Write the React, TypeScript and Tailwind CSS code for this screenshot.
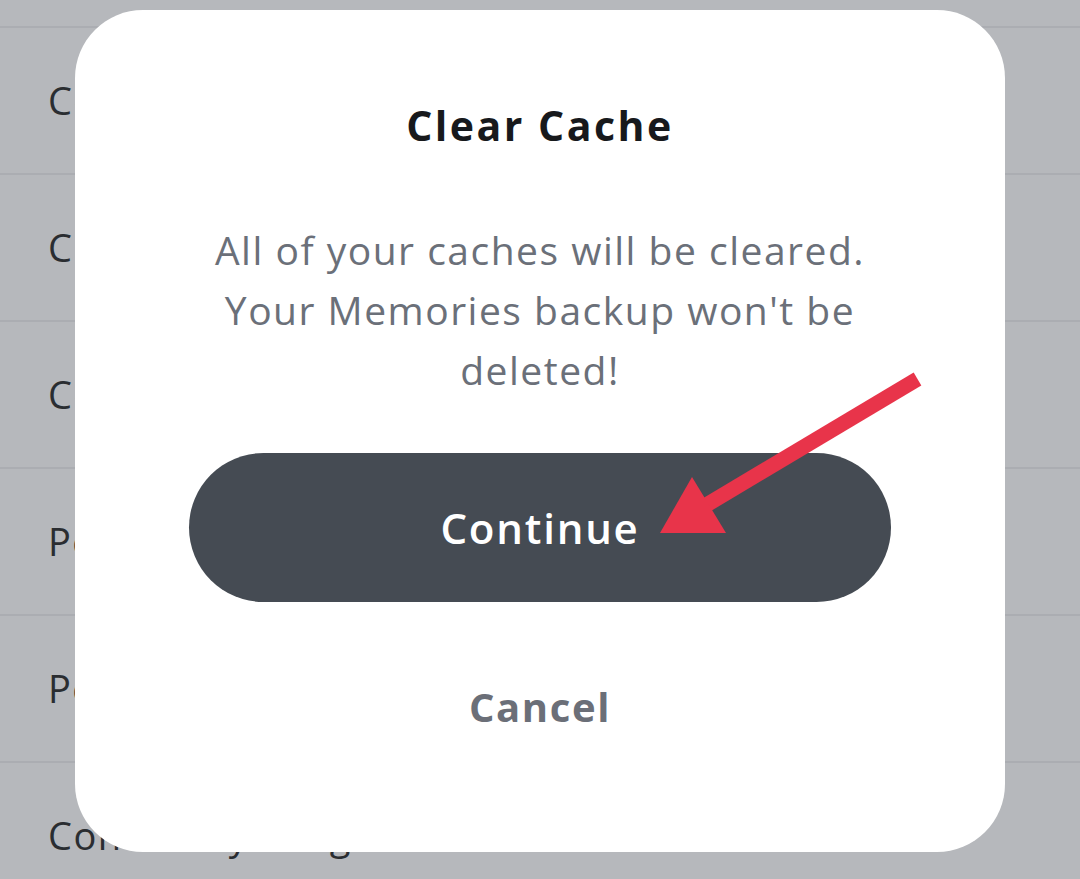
import React from "react";

const rows = [
  "Contact Me",
  "Clear Data",
  "Connected Apps",
  "Permissions",
  "Personalization",
  "Contact Syncing",
];

const ClearCacheModal: React.FC = () => {
  return (
    <div className="absolute left-[75px] top-[10px] w-[930px] h-[842px] bg-white rounded-[68px] flex flex-col items-center">
      <h2 className="mt-[91px] text-[41px] leading-[48px] font-bold tracking-[2.5px] text-[#17191c]">
        Clear Cache
      </h2>
      <p className="mt-[71px] text-center text-[39px] leading-[60px] tracking-[1.5px] text-[#6b7079]">
        All of your caches will be cleared.
        <br />
        Your Memories backup won't be
        <br />
        deleted!
      </p>
      <button className="mt-[53px] w-[702px] h-[149px] rounded-full bg-[#454b53] text-white text-[42px] font-semibold tracking-[1.8px]">
        Continue
      </button>
      <button className="mt-[81px] text-[40px] leading-[48px] font-bold tracking-[1.6px] text-[#6b6f78]">
        Cancel
      </button>
    </div>
  );
};

export default function App() {
  return (
    <div
      className="relative w-[1080px] h-[879px] overflow-hidden bg-[#b6b8bc]"
      style={{ fontFamily: "'Open Sans', 'Noto Sans', sans-serif" }}
    >
      <div className="flex flex-col">
        <div className="h-[26px]" />
        {rows.map((r) => (
          <div
            key={r}
            className="h-[147px] border-t-2 border-[#abadb2] flex items-center pl-[48px] text-[38px] tracking-[1.5px] text-[#2a2d31]"
          >
            {r}
          </div>
        ))}
      </div>

      <ClearCacheModal />

      {/* annotation arrow */}
      <svg className="absolute inset-0" width="1080" height="879" viewBox="0 0 1080 879">
        <line x1="917.5" y1="379" x2="703" y2="507" stroke="#e8344a" strokeWidth="15" />
        <polygon points="660,533 692,477 726,533" fill="#e8344a" />
      </svg>
    </div>
  );
}
